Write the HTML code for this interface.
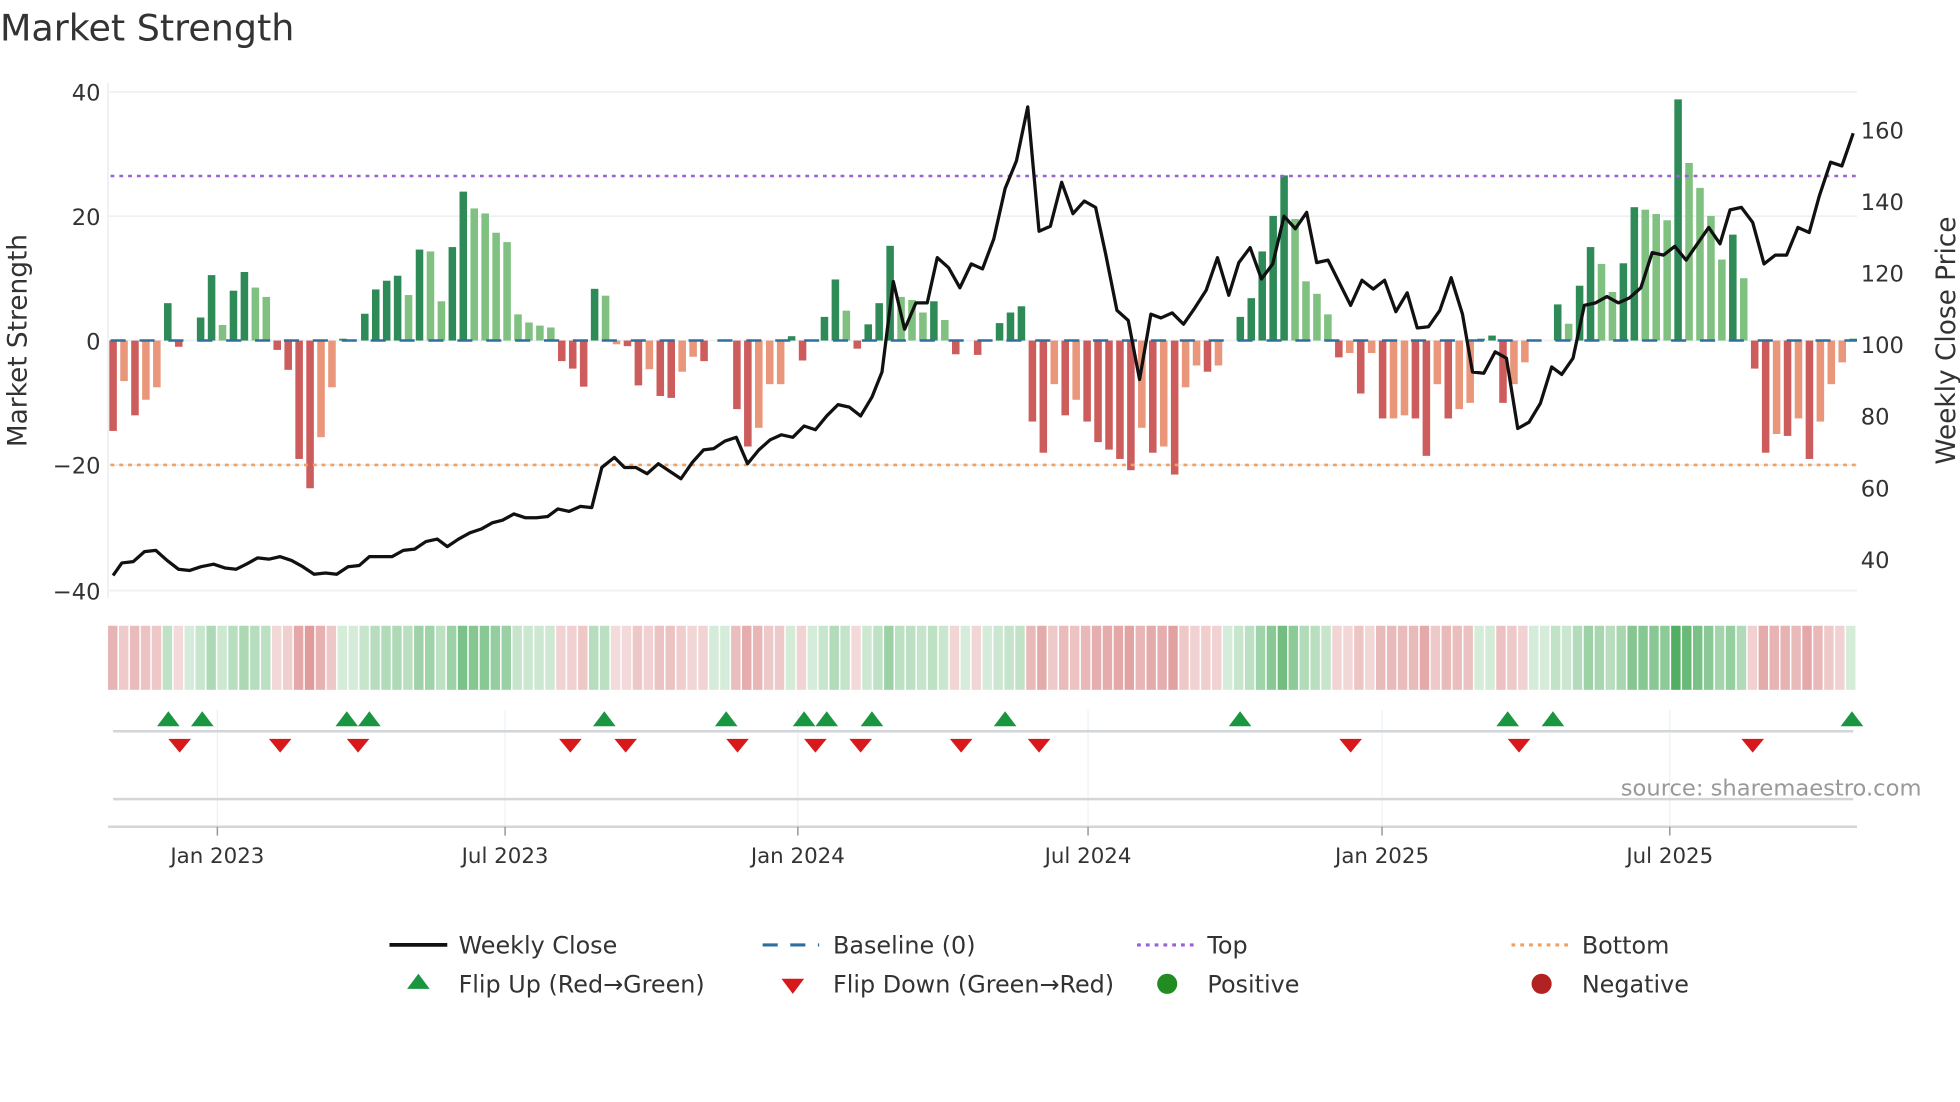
<!DOCTYPE html>
<html><head><meta charset="utf-8"><style>
html,body{margin:0;padding:0;background:#fff;width:1960px;height:1102px;overflow:hidden}
svg{display:block}
text{font-family:"DejaVu Sans","Liberation Sans",sans-serif;fill:#333}
</style></head><body>
<svg id="s" width="1960" height="1102" viewBox="0 0 1560 877" xmlns="http://www.w3.org/2000/svg">
<rect width="1560" height="877" fill="#fff"/>
<text x="0" y="32" font-size="29">Market Strength</text>
<g stroke="#eef1f4" stroke-width="1.5">
<line x1="86" y1="73" x2="1478" y2="73"/><line x1="86" y1="172" x2="1478" y2="172"/><line x1="86" y1="271" x2="1478" y2="271"/><line x1="86" y1="370" x2="1478" y2="370"/><line x1="86" y1="470" x2="1478" y2="470"/>
<line x1="86" y1="66" x2="86" y2="476"/>
</g>
<g font-size="18" text-anchor="end">
<text x="80" y="80">40</text><text x="80" y="179">20</text><text x="80" y="278">0</text><text x="80" y="377">−20</text><text x="80" y="477">−40</text>
</g>
<g font-size="18">
<text x="1481" y="110">160</text><text x="1481" y="167">140</text><text x="1481" y="224">120</text><text x="1481" y="281">100</text><text x="1481" y="338">80</text><text x="1481" y="395">60</text><text x="1481" y="452">40</text>
</g>
<text transform="translate(21,271) rotate(-90)" font-size="21" text-anchor="middle">Market Strength</text>
<text transform="translate(1556,271) rotate(-90)" font-size="21" text-anchor="middle">Weekly Close Price</text>
<g id="bars"></g>
<line x1="88" y1="271" x2="1478" y2="271" stroke="#2e6f9e" stroke-width="2" stroke-dasharray="12 11"/>
<line x1="88" y1="140" x2="1478" y2="140" stroke="#9b5fd6" stroke-width="2" stroke-dasharray="3 4"/>
<line x1="88" y1="370" x2="1478" y2="370" stroke="#f0a060" stroke-width="2" stroke-dasharray="3 4"/>
<polyline id="price" fill="none" stroke="#111" stroke-width="2.6" stroke-linejoin="round"/>
<g id="strip"></g>
<g stroke="#eef1f4" stroke-width="1">
<line x1="173" y1="565" x2="173" y2="658"/><line x1="402" y1="565" x2="402" y2="658"/><line x1="635" y1="565" x2="635" y2="658"/><line x1="866" y1="565" x2="866" y2="658"/><line x1="1100" y1="565" x2="1100" y2="658"/><line x1="1329" y1="565" x2="1329" y2="658"/>
</g>
<line x1="90" y1="582" x2="1475" y2="582" stroke="#d3d6d8" stroke-width="2"/>
<line x1="90" y1="636" x2="1475" y2="636" stroke="#d3d6d8" stroke-width="2"/>
<line x1="86" y1="658" x2="1478" y2="658" stroke="#d3d6d8" stroke-width="2"/>
<g stroke="#999" stroke-width="1.2">
<line x1="173" y1="658" x2="173" y2="665"/><line x1="402" y1="658" x2="402" y2="665"/><line x1="635" y1="658" x2="635" y2="665"/><line x1="866" y1="658" x2="866" y2="665"/><line x1="1100" y1="658" x2="1100" y2="665"/><line x1="1329" y1="658" x2="1329" y2="665"/>
</g>
<g id="flips"></g>
<text x="1290" y="633" font-size="18" style="fill:#999">source: sharemaestro.com</text>
<g font-size="17" text-anchor="middle">
<text x="173" y="687">Jan 2023</text><text x="402" y="687">Jul 2023</text><text x="635" y="687">Jan 2024</text><text x="866" y="687">Jul 2024</text><text x="1100" y="687">Jan 2025</text><text x="1329" y="687">Jul 2025</text>
</g>
<g font-size="19">
<line x1="310" y1="752" x2="356" y2="752" stroke="#111" stroke-width="3"/><text x="365" y="759">Weekly Close</text>
<line x1="607" y1="752" x2="652" y2="752" stroke="#2e6f9e" stroke-width="2.5" stroke-dasharray="12 10"/><text x="663" y="759">Baseline (0)</text>
<line x1="905" y1="752" x2="950" y2="752" stroke="#9b5fd6" stroke-width="2.5" stroke-dasharray="3 4"/><text x="961" y="759">Top</text>
<line x1="1203" y1="752" x2="1248" y2="752" stroke="#f0a060" stroke-width="2.5" stroke-dasharray="3 4"/><text x="1259" y="759">Bottom</text>
<polygon points="324,787 342,787 333,775" fill="#1a9641"/><text x="365" y="790">Flip Up (Red→Green)</text>
<polygon points="622,779 640,779 631,791" fill="#d7191c"/><text x="663" y="790">Flip Down (Green→Red)</text>
<circle cx="929" cy="783" r="8" fill="#228b22"/><text x="961" y="790">Positive</text>
<circle cx="1227" cy="783" r="8" fill="#b22222"/><text x="1259" y="790">Negative</text>
</g>
</svg>
<script>
var NS="http://www.w3.org/2000/svg";
function el(t,a,p){var e=document.createElementNS(NS,t);for(var k in a)e.setAttribute(k,a[k]);p.appendChild(e);return e;}
var d="-14.5d -6.5l -12d -9.5l -7.5l 6d -1d 0 3.7d 10.5d 2.5l 8d 11d 8.5l 7l -1.5d -4.7d -19d -23.7d -15.5l -7.5l 0.3d 0 4.3d 8.2d 9.6d 10.4d 7.3l 14.6d 14.3l 6.3l 15d 23.9d 21.2l 20.4l 17.3l 15.8l 4.2l 2.9l 2.4l 2.1l -3.3d -4.5d -7.4d 8.3d 7.2l -0.6l -0.9d -7.2d -4.6l -8.9d -9.2d -5l -2.6l -3.3d 0 0 -11d -17d -14l -7l -7l 0.7d -3.2d 0 3.8d 9.8d 4.8l -1.3d 2.6d 6d 15.2d 7l 6.5l 4.5l 6.3d 3.3l -2.2d 0 -2.3d 0 2.8d 4.5d 5.5d -13d -18d -7l -12d -9.5l -13d -16.3d -17.5d -19d -20.8d -14l -18d -17l -21.5d -7.5l -4l -5d -4l 0 3.8d 6.8d 14.3d 20d 26.5d 19.5l 9.5l 7.5l 4.2l -2.7d -2l -8.5d -2l -12.5d -12.5l -12l -12.5d -18.5d -7l -12.5d -11l -10l 0.3d 0.8d -10d -7l -3.5l 0 0 5.8d 2.7l 8.8d 15d 12.3l 7.8l 12.4d 21.4d 21l 20.3l 19.3l 38.7d 28.5l 24.5l 20l 13l 17d 10l -4.5d -18d -15l -15.3d -12.5l -19d -13l -7l -3.5l 0.3d".split(" ");
var n=d.length,x0=90,x1=1475,st=(x1-x0)/(n-1);
var bars=document.getElementById("bars"),strip=document.getElementById("strip");
for(var i=0;i<n;i++){var v=parseFloat(d[i]),dk=d[i].slice(-1)=="d",x=x0+i*st;
 var c=v>=0?(dk?"#2e8b57":"#80c080"):(dk?"#cd5c5c":"#e9967a");
 var h=Math.abs(v)*4.96;
 if(h>0.5)el("rect",{x:x-3,y:v>=0?271-h:271,width:6,height:h,fill:c},bars);
 var a=Math.min(1,Math.abs(v)/35);
 var sc=v>=0?"rgba(50,160,70,"+(0.2+0.65*a)+")":"rgba(200,80,80,"+(0.2+0.55*a)+")";
 el("rect",{x:86+i*(1392/n),y:498,width:1392/n-1.2,height:51,fill:sc},strip);}
var p="90,458 97,448 106,447 115,439 124,438 133,446 142,453 151,454 160,451 170,449 179,452 188,453 196,449 205,444 214,445 223,443 232,446 241,451 250,457 259,456 268,457 277,451 286,450 294,443 303,443 312,443 321,438 330,437 339,431 348,429 356,435 365,429 374,424 383,421 392,416 400,414 409,409 418,412 427,412 436,411 444,405 453,407 462,403 471,404 479,372 489,364 497,372 506,372 515,377 524,369 533,375 542,381 551,368 560,358 568,357 577,351 586,348 595,369 604,358 613,350 622,346 631,348 640,339 649,342 658,331 667,322 676,324 685,331 694,316 702,296 711,224 720,262 729,241 738,241 746,205 755,213 764,229 773,210 782,214 791,190 800,150 809,128 818,85 827,184 836,180 845,145 854,170 863,160 872,165 880,202 889,247 898,255 907,302 916,250 924,253 933,249 942,258 951,245 960,231 969,205 978,235 986,209 995,197 1004,222 1013,210 1022,172 1031,182 1040,169 1048,209 1057,207 1066,225 1075,243 1084,223 1093,230 1102,223 1111,248 1120,233 1128,261 1137,260 1146,247 1155,221 1164,250 1172,296 1181,297 1190,280 1199,285 1208,341 1217,336 1226,321 1235,292 1243,298 1252,285 1261,243 1270,241 1279,236 1288,241 1297,237 1306,229 1315,201 1324,203 1333,196 1342,207 1351,194 1360,181 1369,194 1377,167 1386,165 1395,177 1404,210 1413,203 1422,203 1431,181 1440,185 1448,156 1457,129 1466,132 1475,106";
document.getElementById("price").setAttribute("points",p);
var f=document.getElementById("flips");
[134,161,276,294,481,578,640,658,694,800,987,1200,1236,1474].forEach(function(x){el("polygon",{points:(x-9)+",578 "+(x+9)+",578 "+x+",566",fill:"#1a9641"},f);});
[143,223,285,454,498,587,649,685,765,827,1075,1209,1395].forEach(function(x){el("polygon",{points:(x-9)+",588 "+(x+9)+",588 "+x+",599",fill:"#d7191c"},f);});
</script>
</body></html>
